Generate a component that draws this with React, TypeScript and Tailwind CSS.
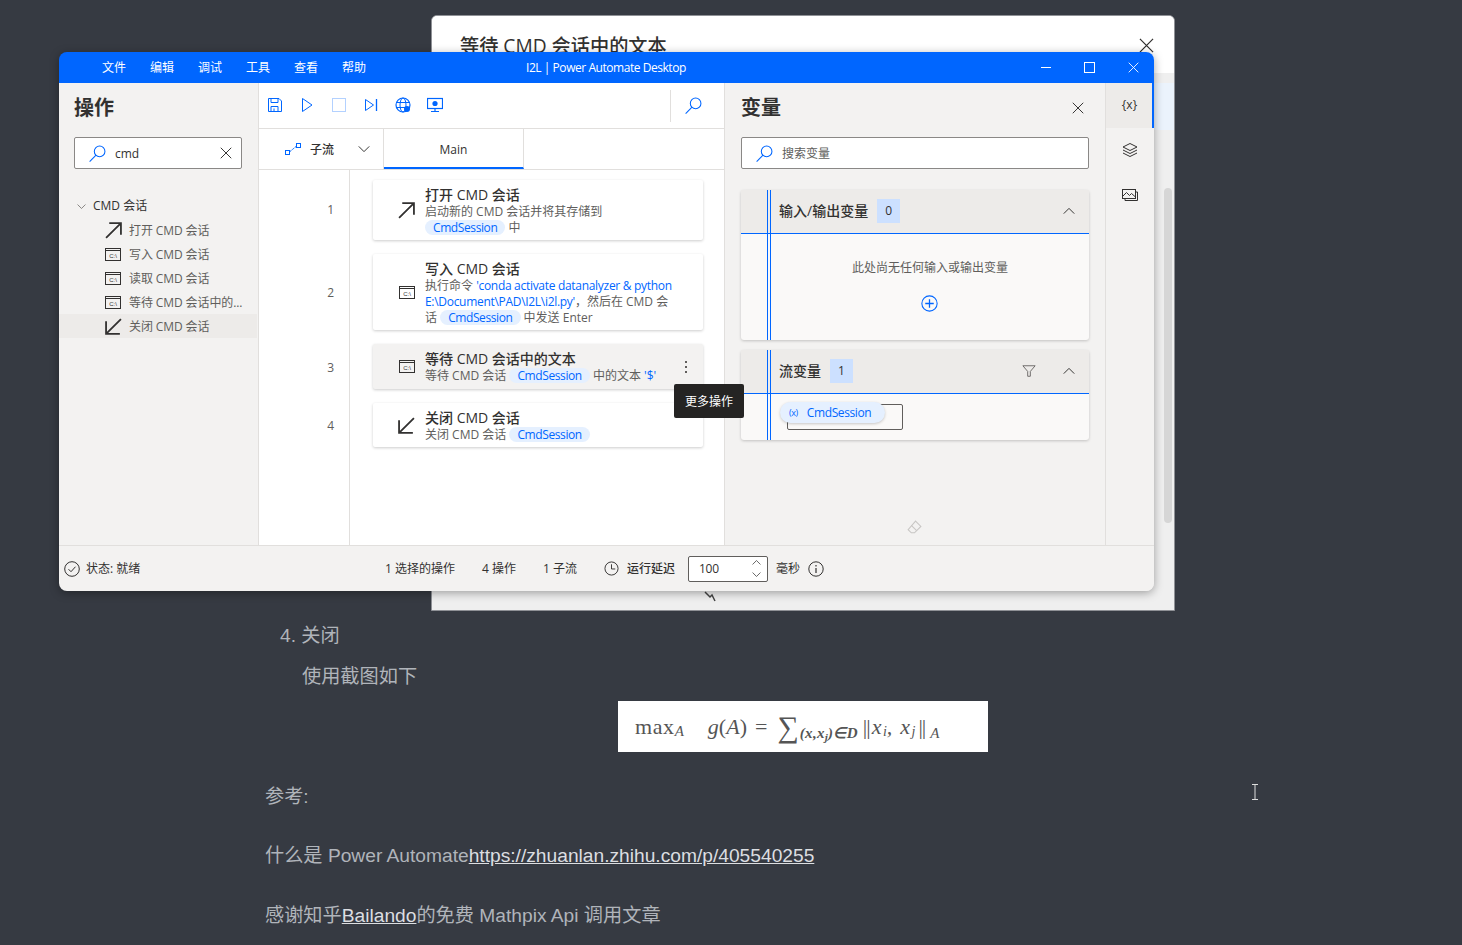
import { ReactNode } from 'react';

const ui = "font-['Open_Sans','Noto_Sans_CJK_SC',sans-serif]";
const article = "font-['Liberation_Sans','Noto_Sans_CJK_SC',sans-serif]";

const menus = ['文件', '编辑', '调试', '工具', '查看', '帮助'];

function Svg({ size = 16, className = '', children }: { size?: number; className?: string; children: ReactNode }) {
  return (
    <svg width={size} height={size} viewBox="0 0 16 16" fill="none" stroke="currentColor" strokeWidth="1" className={`shrink-0 ${className}`}>
      {children}
    </svg>
  );
}

function SearchIcon({ className = '' }: { className?: string }) {
  return (
    <Svg size={17} className={className}>
      <circle cx="10" cy="6" r="5" />
      <path d="M6.6 9.6 0.6 15.6" />
    </Svg>
  );
}

function CloseIcon({ size = 12, className = '' }: { size?: number; className?: string }) {
  return (
    <Svg size={size} className={className}>
      <path d="M1 1l14 14M15 1 1 15" strokeWidth="1.3" />
    </Svg>
  );
}

function OpenArrow({ size = 17 }: { size?: number }) {
  return (
    <Svg size={size}>
      <path d="M1 15 15 1M4 1h11v11" strokeWidth="1.7" />
    </Svg>
  );
}

function CloseArrow({ size = 17 }: { size?: number }) {
  return (
    <Svg size={size}>
      <path d="M15 1 1 15M1 3v12h13" strokeWidth="1.7" />
    </Svg>
  );
}

function CmdIcon() {
  return (
    <svg width="16" height="13" viewBox="0 0 16 13" fill="none" className="shrink-0">
      <rect x="0.5" y="0.5" width="15" height="12" stroke="currentColor" />
      <path d="M1 2.5h14" stroke="currentColor" />
      <text x="8" y="10" textAnchor="middle" fontSize="6" fontFamily="Liberation Sans" fill="currentColor">C:\</text>
    </svg>
  );
}

function Chevron({ up = false, size = 12, className = '' }: { up?: boolean; size?: number; className?: string }) {
  return (
    <Svg size={size} className={className}>
      <path d={up ? 'M1 11.5 8 4.5l7 7' : 'M1 4.5l7 7 7-7'} strokeWidth="1.3" />
    </Svg>
  );
}

function Pill() {
  return (
    <span className="inline-block rounded-full bg-[#e5f0ff] px-[8px] leading-[15px] tracking-[-0.4px] text-[#0066ff]">CmdSession</span>
  );
}

function ToolbarIcons() {
  return (
    <div className="flex items-center gap-[16px] pb-[1px] text-[#0066ff]">
      <Svg>
        <path d="M1.5 1.5h10.5l2.5 2.5v10.5h-13z" />
        <path d="M4 1.5v4h7v-4M4 14.5v-5h7v5M7 11.5v3" />
      </Svg>
      <Svg>
        <path d="M3.5 1.5v13l9.5-6.5z" />
      </Svg>
      <Svg className="text-[#b3d1ff]">
        <rect x="1.5" y="1.5" width="13" height="13" />
      </Svg>
      <Svg>
        <path d="M2.5 2.5v11l8-5.5z" />
        <path d="M13.5 2v12" strokeWidth="1.3" />
      </Svg>
      <Svg>
        <circle cx="8" cy="8" r="7" strokeWidth="1.2" />
        <ellipse cx="8" cy="8" rx="3" ry="7" />
        <path d="M1 5.5h14M1 10.5h14" />
        <circle cx="12" cy="12" r="3" fill="currentColor" stroke="none" />
      </Svg>
      <Svg>
        <rect x="0.5" y="1.5" width="15" height="10" strokeWidth="1.2" />
        <circle cx="8" cy="6.5" r="2.6" fill="currentColor" stroke="none" />
        <path d="M8 11.5v3M4 14.5h8" strokeWidth="1.2" />
      </Svg>
    </div>
  );
}

function FlowCard({ icon, title, children, active = false, menu = false, h }: { icon: ReactNode; title: string; children: ReactNode; active?: boolean; menu?: boolean; h: string }) {
  return (
    <div className={`relative flex w-[330px] items-center rounded-[2px] shadow-[0_1px_3px_rgba(0,0,0,0.2)] ${h} ${active ? 'bg-[#f3f2f1]' : 'bg-white'}`}>
      <div className="flex w-[52px] shrink-0 justify-end pr-[10px] text-[#323130]">{icon}</div>
      <div className="min-w-0 flex-1 pt-[1px]">
        <div className="text-[14px] leading-[18px] font-medium text-[#323130]">{title}</div>
        <div className="w-[254px] text-[12px] leading-[16px] text-[#605e5c]">{children}</div>
      </div>
      {menu && (
        <div className="mr-[16px] flex flex-col gap-[3px]">
          <span className="h-[2px] w-[2px] bg-[#605e5c]" />
          <span className="h-[2px] w-[2px] bg-[#605e5c]" />
          <span className="h-[2px] w-[2px] bg-[#605e5c]" />
        </div>
      )}
    </div>
  );
}

function LeftPanel() {
  const items: [ReactNode, string, boolean][] = [
    [<OpenArrow />, '打开 CMD 会话', false],
    [<CmdIcon />, '写入 CMD 会话', false],
    [<CmdIcon />, '读取 CMD 会话', false],
    [<CmdIcon />, '等待 CMD 会话中的...', false],
    [<CloseArrow />, '关闭 CMD 会话', true],
  ];
  return (
    <div className="flex w-[200px] shrink-0 flex-col border-r border-[#e1dfdd] bg-[#f3f2f1]">
      <h2 className="mt-[11px] ml-[15px] text-[20px] leading-[28px] font-semibold text-[#323130]">操作</h2>
      <div className="mt-[15px] ml-[15px] flex h-[32px] w-[168px] items-center rounded-[2px] border border-[#8a8886] bg-white pl-[14px] pr-[9px]">
        <SearchIcon className="text-[#0066ff]" />
        <span className="mt-[2px] ml-[9px] flex-1 text-[12px] text-[#323130]">cmd</span>
        <CloseIcon className="text-[#323130]" />
      </div>
      <div className="mt-[25px] flex h-[24px] items-center pl-[18px] text-[12px] text-[#323130]">
        <Chevron size={9} className="text-[#605e5c]" />
        <span className="ml-[7px]">CMD 会话</span>
      </div>
      {items.map(([icon, label, on]) => (
        <div key={label} className={`flex h-[24px] w-[198px] items-center pl-[46px] text-[#323130] ${on ? 'bg-[#edebe9]' : ''}`}>
          <span className="flex w-[16px] justify-center">{icon}</span>
          <span className="mt-[2px] ml-[8px] whitespace-nowrap text-[12px] tracking-[-0.1px] text-[#605e5c]">{label}</span>
        </div>
      ))}
    </div>
  );
}

function CenterPanel() {
  return (
    <div className="flex w-[466px] shrink-0 flex-col border-r border-[#e1dfdd] bg-white">
      <div className="flex h-[46px] items-center border-b border-[#e1dfdd] pl-[8px]">
        <ToolbarIcons />
        <div className="ml-auto h-[32px] w-px bg-[#e1dfdd]" />
        <SearchIcon className="mr-[22px] ml-[14px] text-[#0066ff]" />
      </div>
      <div className="flex h-[41px] border-b border-[#e1dfdd]">
        <div className="flex w-[125px] items-center border-r border-[#e1dfdd] pl-[26px]">
          <Svg className="text-[#0066ff]">
            <rect x="0.5" y="9.5" width="4" height="4" />
            <rect x="11.5" y="2.5" width="4" height="4" />
            <path d="M5 10.5 11 5.5" strokeDasharray="2 1" />
          </Svg>
          <span className="mt-[2px] ml-[9px] text-[12px] font-medium text-[#323130]">子流</span>
          <Chevron className="ml-[24px] text-[#323130]" />
        </div>
        <div className="flex w-[140px] items-center justify-center border-r border-b-2 border-[#e1dfdd] border-b-[#0066ff] pt-[3px] text-[12px] font-medium text-[#323130]">
          Main
        </div>
      </div>
      <div className="flex flex-1">
        <div className="flex w-[91px] flex-col gap-[14px] border-r border-[#e1dfdd] pt-[10px] pr-[15px] text-right text-[12px] text-[#605e5c]">
          <div className="flex h-[60px] items-center justify-end">1</div>
          <div className="flex h-[78px] items-center justify-end">2</div>
          <div className="flex h-[43px] items-center justify-end">3</div>
          <div className="flex h-[46px] items-center justify-end">4</div>
        </div>
        <div className="flex flex-col gap-[14px] pt-[10px] pl-[23px]">
          <FlowCard h="h-[60px]" icon={<OpenArrow />} title="打开 CMD 会话">
            启动新的 CMD 会话并将其存储到
            <br />
            <Pill /> 中
          </FlowCard>
          <FlowCard h="h-[76px]" icon={<CmdIcon />} title="写入 CMD 会话">
            执行命令 <span className="tracking-[-0.3px] text-[#0066ff]">'conda activate datanalyzer &amp; python E:\Document\PAD\I2L\i2l.py'</span>，然后在 CMD 会话 <Pill /> 中发送 Enter
          </FlowCard>
          <FlowCard h="h-[45px]" active menu icon={<CmdIcon />} title="等待 CMD 会话中的文本">
            等待 CMD 会话 <Pill /> 中的文本 <span className="text-[#0066ff]">'$'</span>
          </FlowCard>
          <FlowCard h="h-[44px]" icon={<CloseArrow />} title="关闭 CMD 会话">
            关闭 CMD 会话 <Pill />
          </FlowCard>
        </div>
      </div>
    </div>
  );
}

function VarSection({ title, count, filter, h, children }: { title: string; count: string; filter?: boolean; h: string; children: ReactNode }) {
  return (
    <section className={`relative rounded-[3px] bg-[#faf9f8] shadow-[0_1px_3px_rgba(0,0,0,0.2)] ${h}`}>
      <div className="flex h-[44px] items-center border-b border-[#0066ff] bg-[#edebe9] pb-[2px] pl-[38px] pr-[14px]">
        <span className="text-[14px] font-medium text-[#323130]">{title}</span>
        <span className="ml-[9px] flex h-[24px] w-[23px] items-center justify-center bg-[#cce0ff] text-[12px] text-[#323130]">{count}</span>
        {filter && (
          <Svg size={14} className="ml-auto text-[#605e5c]">
            <path d="M1 2h14L9.5 8.5V14h-3V8.5z" />
          </Svg>
        )}
        <Chevron up className={`${filter ? 'ml-[27px]' : 'ml-auto'} text-[#323130]`} />
      </div>
      {children}
      <div className="absolute top-0 bottom-0 left-[26px] w-[4px] border-x border-[#0066ff]" />
    </section>
  );
}

function RightPanel() {
  return (
    <div className="flex w-[380px] shrink-0 flex-col bg-[#f3f2f1] px-[16px]">
      <div className="mt-[11px] flex items-center justify-between pr-[5px]">
        <h2 className="text-[20px] leading-[28px] font-semibold text-[#323130]">变量</h2>
        <CloseIcon className="text-[#323130]" />
      </div>
      <div className="mt-[15px] flex h-[32px] items-center rounded-[2px] border border-[#8a8886] bg-white pl-[14px]">
        <SearchIcon className="text-[#0066ff]" />
        <span className="mt-[2px] ml-[9px] text-[12px] text-[#605e5c]">搜索变量</span>
      </div>
      <div className="mt-[21px] flex flex-col gap-[10px]">
        <VarSection title="输入/输出变量" count="0" h="h-[150px]">
          <p className="mt-[25px] pl-[30px] text-center text-[12px] text-[#605e5c]">此处尚无任何输入或输出变量</p>
          <div className="mt-[18px] flex justify-center pl-[29px] text-[#0066ff]">
            <Svg size={17}>
              <circle cx="8" cy="8" r="7.2" />
              <path d="M8 4v8M4 8h8" strokeWidth="1.2" />
            </Svg>
          </div>
        </VarSection>
        <VarSection title="流变量" count="1" filter h="h-[90px]">
          <div className="relative mt-[10px] ml-[46px] h-[26px] w-[116px] rounded-[2px] border border-[#605e5c]">
            <div className="absolute top-[-3px] left-[-8px] flex h-[21px] w-[105px] items-center rounded-full bg-[#e5f0ff] pl-[9px] text-[12px] tracking-[-0.4px] text-[#0066ff] shadow-[0_1px_3px_rgba(0,0,0,0.2)]">
              <span className="text-[9px]">(x)</span>
              <span className="ml-[9px]">CmdSession</span>
            </div>
          </div>
        </VarSection>
      </div>
      <div className="mt-auto mb-[9px] flex justify-center pr-[1px] text-[#c8c6c4]">
        <Svg size={17}>
          <path d="M9 2l5 5-6 6H5l-3-3z" />
          <path d="M5 6l5 5" />
        </Svg>
      </div>
    </div>
  );
}

function SideRail() {
  return (
    <div className="flex flex-1 flex-col items-center border-l border-[#e1dfdd] bg-[#f3f2f1] text-[#323130]">
      <div className="flex h-[45px] w-full items-center justify-center border-r-2 border-[#0066ff] bg-[#edebe9] pb-[1px] pl-[1px] text-[12px]">{'{x}'}</div>
      <div className="mt-[14px] flex h-[16px] items-center">
        <Svg>
          <path d="M8 1.5 15 5l-7 3.5L1 5z" />
          <path d="M1 8l7 3.5L15 8M1 11l7 3.5 7-3.5" />
        </Svg>
      </div>
      <div className="mt-[29px] flex h-[16px] items-center">
        <Svg>
          <rect x="0.5" y="2.5" width="13" height="9" />
          <path d="M14 5h1.5v8.5H3V12M1 9l3.5-3.5 3 3 2-2 4 3.5" />
        </Svg>
      </div>
    </div>
  );
}

function StatusBar() {
  return (
    <div className="flex h-[46px] items-center border-t border-[#e1dfdd] bg-[#f3f2f1] pl-[5px] text-[12px] text-[#323130]">
      <Svg>
        <circle cx="8" cy="8" r="7.3" />
        <path d="M4.5 8.2 7 10.7l4.5-5" />
      </Svg>
      <span className="mt-[1px] ml-[6px] w-[299px]">状态: 就绪</span>
      <span className="mt-[1px] w-[97px]">1 选择的操作</span>
      <span className="mt-[1px] w-[61px]">4 操作</span>
      <span className="mt-[1px] w-[61px]">1 子流</span>
      <Svg size={15}>
        <circle cx="8" cy="8" r="7" />
        <path d="M8 3.5V8.5h4" />
      </Svg>
      <span className="mt-[1px] ml-[8px] font-medium">运行延迟</span>
      <div className="ml-[13px] flex h-[26px] w-[80px] items-center justify-between rounded-[2px] border border-[#605e5c] bg-white pl-[10px] pr-[6px]">
        <span className="tracking-[-0.3px]">100</span>
        <div className="flex flex-col gap-[3px]">
          <Chevron up size={9} />
          <Chevron size={9} />
        </div>
      </div>
      <span className="mt-[1px] ml-[8px]">毫秒</span>
      <Svg size={16} className="ml-[8px]">
        <circle cx="8" cy="8" r="7.2" />
        <path d="M8 7v5M8 4v1.5" strokeWidth="1.2" />
      </Svg>
    </div>
  );
}

function PadWindow() {
  return (
    <div className={`absolute top-[52px] left-[59px] flex h-[539px] w-[1095px] flex-col overflow-hidden rounded-[8px] shadow-[0_2px_10px_rgba(0,0,0,0.35)] ${ui}`}>
      <header className="relative flex h-[31px] shrink-0 items-center bg-[#0066ff] pl-[43px] text-[12px] text-white">
        <nav className="flex gap-[24px]">
          {menus.map((m) => (
            <span key={m}>{m}</span>
          ))}
        </nav>
        <span className="absolute left-[467px] tracking-[-0.45px] whitespace-nowrap">I2L | Power Automate Desktop</span>
        <div className="ml-auto flex items-center gap-[33px] pr-[15px]">
          <span className="h-px w-[10px] bg-white" />
          <span className="h-[11px] w-[11px] border border-white" />
          <CloseIcon size={11} />
        </div>
      </header>
      <div className="flex min-h-0 flex-1">
        <LeftPanel />
        <CenterPanel />
        <RightPanel />
        <SideRail />
      </div>
      <StatusBar />
    </div>
  );
}

function DialogBehind() {
  return (
    <div className={`absolute top-[15px] left-[431px] h-[596px] w-[744px] overflow-hidden rounded-t-[6px] border border-[#8f9196] bg-[#efefef] ${ui}`}>
      <div className="flex h-[57px] items-start justify-between bg-white pt-[17px] pr-[20px] pl-[28px] text-[#323130]">
        <span className="text-[19.2px] leading-[26px] font-medium">等待 CMD 会话中的文本</span>
        <CloseIcon size={15} className="mt-[5px]" />
      </div>
      <div className="absolute top-[67px] right-0 h-[47px] w-[20px] bg-[#ebf3fc]" />
      <div className="absolute top-[172px] right-[2px] h-[335px] w-[8px] rounded-full bg-[#d6d6d6]" />
      <div className="absolute top-[575px] left-[272px] text-[#444]">
        <svg width="16" height="12" viewBox="0 0 16 12" fill="none" stroke="currentColor" strokeWidth="1.5">
          <path d="M1 1l5 5 2-2 3 6" />
        </svg>
      </div>
    </div>
  );
}

function Formula() {
  return (
    <div className="ml-[353px] mt-[4px] flex h-[51px] w-[370px] items-center whitespace-nowrap bg-white pl-[17px] font-['Liberation_Serif',serif] text-[22px] text-[#555]">
      <span className="tracking-[0.6px]">max</span>
      <i className="mt-[10px] text-[15px]">A</i>
      <i className="ml-[24px]">g</i>
      <span>(</span>
      <i>A</i>
      <span>)</span>
      <span className="mx-[8px]">=</span>
      <span className="ml-[2px] text-[30px] leading-none">∑</span>
      <i className="mt-[14px] ml-[1px] text-[15px] font-bold tracking-[0.3px]">(x,x<sub className="text-[11px]">j</sub>)∈D</i>
      <span className="ml-[5px] tracking-[-1px] not-italic">||</span>
      <i className="ml-[2px] tracking-[1.5px]">x</i>
      <i className="mt-[10px] text-[14px]">i</i>
      <i className="tracking-[8px]">,</i>
      <i className="tracking-[1.5px]">x</i>
      <i className="mt-[10px] text-[14px]">j</i>
      <span className="ml-[3px] tracking-[-1px]">||</span>
      <i className="mt-[14px] ml-[5px] text-[15px]">A</i>
    </div>
  );
}

export default function App() {
  return (
    <div className="relative h-[945px] w-[1462px] overflow-hidden bg-[#363a42]">
      <main className={`pt-[616px] pl-[265px] text-[19.2px] text-[#b0b4ba] ${article}`}>
        <p className="pl-[15px] leading-[40px]">4. 关闭</p>
        <p className="mt-px pl-[37px] leading-[40px]">使用截图如下</p>
        <Formula />
        <p className="mt-[25px] leading-[40px]">参考:</p>
        <p className="mt-[19px] leading-[40px]">
          什么是 Power Automate<a className="text-[#dcdee1] underline">https://zhuanlan.zhihu.com/p/405540255</a>
        </p>
        <p className="mt-[20px] leading-[40px]">
          感谢知乎<a className="text-[#dcdee1] underline">Bailando</a>的免费 Mathpix Api 调用文章
        </p>
      </main>
      <DialogBehind />
      <PadWindow />
      <div className={`absolute top-[384px] left-[674px] flex h-[34px] w-[70px] items-center justify-center rounded-[2px] bg-[#252423] pt-[1px] text-[12px] text-white ${ui}`}>更多操作</div>
      <div className="absolute top-[784px] left-[1251px] h-[16px] w-[8px] text-[#ddd]">
        <svg width="8" height="16" viewBox="0 0 8 16" fill="none" stroke="currentColor">
          <path d="M1 .5h6M4 .5v15M1 15.5h6" />
        </svg>
      </div>
    </div>
  );
}
